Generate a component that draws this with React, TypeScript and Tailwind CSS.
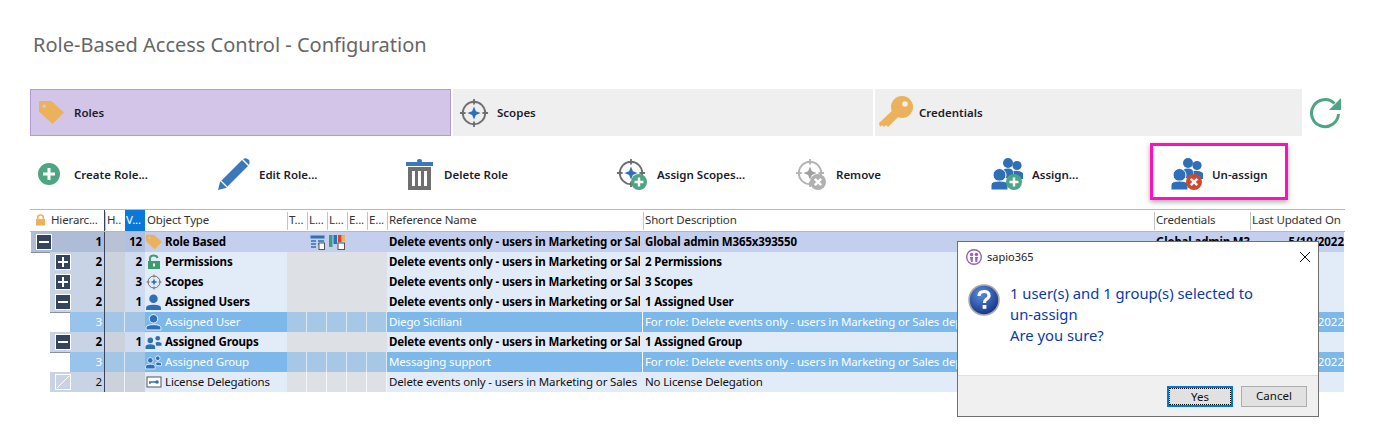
import type { ReactNode } from 'react'

const cols = 'grid grid-cols-[75px_20px_20px_142px_20px_20px_20px_20px_20px_256px_511px_96px_94px]'

function TagIcon({ size = 25, hole = '#d3c5e8' }: { size?: number; hole?: string }) {
  return (
    <svg width={size} height={size} viewBox="0 0 24 24">
      <path d="M0 1 H11 Q12 1 13 2 L24 12 L13 23 L0 11 Z" fill="#ebb25b" />
      <circle cx="5" cy="6" r="1.6" fill={hole} />
    </svg>
  )
}

function Crosshair({ size = 30, color = '#6f6f6f', star = '#2f6fb7' }: { size?: number; color?: string; star?: string }) {
  return (
    <svg width={size} height={size} viewBox="0 0 32 32">
      <circle cx="16" cy="16" r="12" fill="none" stroke={color} strokeWidth="2" />
      <path d="M16 1 V7 M16 25 V31 M1 16 H7 M25 16 H31" stroke={color} strokeWidth="2" />
      <path d="M16 9 L18 14 L23 16 L18 18 L16 23 L14 18 L9 16 L14 14 Z" fill={star} />
    </svg>
  )
}

function Badge({ color, plus }: { color: string; plus: boolean }) {
  return (
    <svg className="absolute right-[1px] bottom-0" width="16" height="16" viewBox="0 0 16 16">
      <circle cx="8" cy="8" r="8" fill={color} />
      {plus ? (
        <path d="M8 3.5 V12.5 M3.5 8 H12.5" stroke="#fff" strokeWidth="2.4" />
      ) : (
        <path d="M4.8 4.8 L11.2 11.2 M11.2 4.8 L4.8 11.2" stroke="#fff" strokeWidth="2.4" />
      )}
    </svg>
  )
}

function People({ badge }: { badge: ReactNode }) {
  return (
    <div className="relative w-[32px] h-[32px]">
      <svg width="32" height="32" viewBox="0 0 32 32" fill="#2f6fb7">
        <circle cx="17" cy="5" r="5" />
        <path d="M11 20 V15 Q11 10.5 17 10.5 Q22 10.5 22 14 V20 Z" />
        <circle cx="26" cy="7.5" r="4.6" />
        <path d="M22.5 21 V13 Q28 12 32 15 V21 Z" />
        <circle cx="8.5" cy="17" r="6.5" stroke="#fff" strokeWidth="1" />
        <path d="M0 32 V27 Q0 23 8.5 23 Q17 23 17 27 V32 Z" stroke="#fff" strokeWidth="1" />
      </svg>
      {badge}
    </div>
  )
}

function SmallPerson({ outline }: { outline?: boolean }) {
  return (
    <svg width="17" height="17" viewBox="0 0 16 16" fill="#2f6fb7" stroke={outline ? '#fff' : 'none'} strokeWidth="0.8">
      <circle cx="8" cy="4.5" r="4" />
      <path d="M1 15 V13 Q1 10 8 10 Q15 10 15 13 V15 Z" />
    </svg>
  )
}

function SmallGroup({ outline }: { outline?: boolean }) {
  return (
    <svg width="17" height="17" viewBox="0 0 16 16" fill="#2f6fb7" stroke={outline ? '#fff' : 'none'} strokeWidth="0.7">
      <circle cx="12" cy="4" r="2.2" />
      <path d="M10 8 Q12 7 15.5 8.4 V11 H10.5 Z" />
      <circle cx="5" cy="6" r="2.6" />
      <path d="M0.5 14 V12 Q0.5 9.6 5 9.6 Q9.5 9.6 9.5 12 V14 Z" />
    </svg>
  )
}

function SmallLock() {
  return (
    <svg width="16" height="16" viewBox="0 0 16 16">
      <path d="M4 7 V4.5 Q4 1.5 7.5 1.5 Q11 1.5 11.5 4" fill="none" stroke="#3d9b6e" strokeWidth="2" />
      <rect x="2" y="7" width="12" height="8" fill="#3d9b6e" />
      <rect x="7" y="9.5" width="2" height="3" fill="#fff" />
    </svg>
  )
}

function SmallLicense() {
  return (
    <svg width="16" height="16" viewBox="0 0 16 16">
      <rect x="1" y="3" width="14" height="10" fill="#fff" stroke="#555" />
      <circle cx="11" cy="8" r="1.8" fill="#2f6fb7" />
      <path d="M3 8 H10 M4 8 V10" stroke="#2f6fb7" strokeWidth="1.4" />
    </svg>
  )
}

function Expander({ kind }: { kind: 'plus' | 'minus' | 'none' }) {
  if (kind === 'none') {
    return (
      <svg width="16" height="16" viewBox="0 0 16 16">
        <rect x="0.5" y="0.5" width="15" height="15" fill="none" stroke="#fff" />
        <path d="M2 14 L14 2" stroke="#fff" />
      </svg>
    )
  }
  return (
    <svg width="16" height="16" viewBox="0 0 16 16">
      <rect x="0.5" y="0.5" width="15" height="15" fill="#33445c" stroke="#fff" />
      <path d={kind === 'plus' ? 'M3 8 H13 M8 3 V13' : 'M3 8 H13'} stroke="#fff" strokeWidth="2" />
    </svg>
  )
}

const rows = [
  { level: 1, exp: 'minus', count: '12', icon: <TagIcon size={16} hole="#c3cdec" />, type: 'Role Based', ref: 'Delete events only - users in Marketing or Sales', desc: 'Global admin M365x393550', cred: 'Global admin M365x393550', date: '5/10/2022', kind: 'root' },
  { level: 2, exp: 'plus', count: '2', icon: <SmallLock />, type: 'Permissions', ref: 'Delete events only - users in Marketing or Sales', desc: '2 Permissions', kind: 'group' },
  { level: 2, exp: 'plus', count: '3', icon: <Crosshair size={16} />, type: 'Scopes', ref: 'Delete events only - users in Marketing or Sales', desc: '3 Scopes', kind: 'group' },
  { level: 2, exp: 'minus', count: '1', icon: <SmallPerson />, type: 'Assigned Users', ref: 'Delete events only - users in Marketing or Sales', desc: '1 Assigned User', kind: 'group' },
  { level: 3, exp: '', count: '', icon: <SmallPerson outline />, type: 'Assigned User', ref: 'Diego Siciliani', desc: 'For role: Delete events only - users in Marketing or Sales department', date: '5/10/2022', kind: 'selected' },
  { level: 2, exp: 'minus', count: '1', icon: <SmallGroup />, type: 'Assigned Groups', ref: 'Delete events only - users in Marketing or Sales', desc: '1 Assigned Group', kind: 'group' },
  { level: 3, exp: '', count: '', icon: <SmallGroup outline />, type: 'Assigned Group', ref: 'Messaging support', desc: 'For role: Delete events only - users in Marketing or Sales department', date: '5/10/2022', kind: 'selected' },
  { level: 2, exp: 'none', count: '', icon: <SmallLicense />, type: 'License Delegations', ref: 'Delete events only - users in Marketing or Sales department', desc: 'No License Delegation', kind: 'plain' },
]

const palette: Record<string, { hier: string; num: string; count: string; main: string; mid: string; text: string; border: string; div: string }> = {
  root: { hier: 'bg-[#aebcd8]', num: 'bg-[#b9c2d4]', count: 'bg-[#b2c0df]', main: 'bg-[#c4ceed]', mid: 'bg-[#c4ceed]', text: 'font-bold text-black', border: 'border-b border-[#8a8f99]', div: '' },
  group: { hier: 'bg-[#c8d4e6]', num: 'bg-[#ccd2dc]', count: 'bg-[#cfdcf0]', main: 'bg-[#e2ebf8]', mid: 'bg-[#dde0e5]', text: 'font-bold text-black', border: 'border-b border-[#8a8f99]', div: '' },
  selected: { hier: 'bg-[#97c3ec]', num: 'bg-[#a3c6e6]', count: 'bg-[#a3c6e6]', main: 'bg-[#7db8ea]', mid: 'bg-[#a6c8e6]', text: 'text-white', border: '', div: 'border-r border-white/60' },
  plain: { hier: 'bg-[#c8d4e6]', num: 'bg-[#ccd2dc]', count: 'bg-[#ccd2dc]', main: 'bg-[#e2ebf8]', mid: 'bg-[#dde0e5]', text: 'text-[#111]', border: '', div: 'border-r border-white/70' },
}

function Tab({ label, icon, active, width, box }: { label: string; icon: ReactNode; active?: boolean; width: string; box: string }) {
  return (
    <div className={`${width} flex items-center h-full ${active ? 'bg-[#d3c5e8] border border-[#b19cd9]' : 'bg-[#efefef]'}`}>
      <div className={`${box} flex shrink-0`}>{icon}</div>
      <span className="text-[11.5px] font-semibold text-[#1c1c2c]">{label}</span>
    </div>
  )
}

function Tool({ label, icon, width, children }: { label: string; icon: ReactNode; width: string; children?: ReactNode }) {
  return (
    <div className={`${width} relative flex items-center h-[50px] shrink-0`}>
      <div className="w-[50px] flex justify-center shrink-0">{icon}</div>
      <span className="text-[11.5px] pt-[1px] font-semibold text-[#1c1c2c] whitespace-nowrap">{label}</span>
      {children}
    </div>
  )
}

function HeaderCell({ children, blue }: { children?: ReactNode; blue?: boolean }) {
  return (
    <div className={`flex items-center pl-[1px] pb-[1px] overflow-hidden whitespace-nowrap ${blue ? 'h-full bg-[#0a78d7] text-white' : 'border-l border-[#c4c4c4] h-[18px]'}`}>
      {children}
    </div>
  )
}

export default function App() {
  return (
    <div className="relative w-[1375px] h-[445px] overflow-hidden bg-white font-['Noto_Sans',sans-serif]">
      <div className="h-[89px] flex items-center pl-[33px] text-[20px] text-[#666]">
        Role-Based Access Control - Configuration
      </div>

      <div className="h-[47px] flex pl-[30px] gap-[2px]">
        <Tab active width="w-[421px]" box="w-[43px] pl-[8px]" label="Roles" icon={<TagIcon />} />
        <Tab width="w-[420px]" box="w-[44px] pl-[6px]" label="Scopes" icon={<Crosshair />} />
        <Tab
          width="w-[427px]"
          box="w-[44px] pl-[4px]"
          label="Credentials"
          icon={
            <svg width="34" height="34" viewBox="0 0 34 34">
              <circle cx="23" cy="11" r="11" fill="#ebb25b" />
              <circle cx="26" cy="8" r="2.8" fill="#efefef" />
              <path d="M16 12 L22 18 L9 31 L7 29 L5 31 L3 29 L1 31 L0 27 Z" fill="#ebb25b" />
            </svg>
          }
        />
        <div className="flex-1 flex pl-[6px] items-center">
          <svg width="32" height="32" viewBox="0 0 32 32">
            <path d="M24.5 6.5 A13.5 13.5 0 1 0 28.5 17" fill="none" stroke="#4ca583" strokeWidth="3" />
            <path d="M19 13 H31 V1 Z" fill="#4ca583" />
          </svg>
        </div>
      </div>

      <div className="h-[73px] flex items-center pl-[24px] pt-[3px]">
        <Tool
          width="w-[185px]"
          label="Create Role..."
          icon={
            <svg width="22" height="22" viewBox="0 0 22 22">
              <circle cx="11" cy="11" r="11" fill="#4ca583" />
              <path d="M11 5 V17 M5 11 H17" stroke="#fff" strokeWidth="3" />
            </svg>
          }
        />
        <Tool
          width="w-[185px]"
          label="Edit Role..."
          icon={
            <svg width="32" height="32" viewBox="0 0 32 32">
              <path d="M0 32 L2 24 L24 2 L30 8 L8 30 Z" fill="#3a78bb" />
              <path d="M25 1 Q28 -1 31 2 Q32 4 31 7 Z" fill="#3a78bb" />
              <path d="M3 23 L9 29" stroke="#fff" strokeWidth="1.2" />
            </svg>
          }
        />
        <Tool
          width="w-[213px]"
          label="Delete Role"
          icon={
            <svg className="ml-[2px]" width="28" height="32" viewBox="0 0 28 32">
              <rect x="0" y="4" width="27" height="4" fill="#3a78bb" />
              <rect x="11" y="1" width="5" height="4" rx="2" fill="#3a78bb" />
              <rect x="2" y="9" width="23" height="23" fill="#6f6f6f" />
              <path d="M7.5 13 V28 M13.5 13 V28 M19.5 13 V28" stroke="#fff" strokeWidth="3" />
            </svg>
          }
        />
        <Tool
          width="w-[179px]"
          label="Assign Scopes..."
          icon={
            <div className="relative w-[32px] h-[32px]">
              <Crosshair size={30} />
              <Badge color="#4ca583" plus />
            </div>
          }
        />
        <Tool
          width="w-[196px]"
          label="Remove"
          icon={
            <div className="relative w-[32px] h-[32px]">
              <Crosshair size={30} color="#b4b4b4" star="#a0a0a0" />
              <Badge color="#b0b0b0" plus={false} />
            </div>
          }
        />
        <Tool width="w-[180px]" label="Assign..." icon={<People badge={<Badge color="#4ca583" plus />} />} />
        <Tool width="w-[130px]" label="Un-assign" icon={<People badge={<Badge color="#d0492f" plus={false} />} />}>
          <div className="absolute left-[-12px] top-[-6px] w-[138px] h-[57px] border-[3px] border-[#ff0fbe] shadow-[0_2px_5px_rgba(0,0,0,0.35)]" />
        </Tool>
      </div>

      <div className="ml-[30px] w-[1315px] text-[11.5px] tracking-[-0.15px] overflow-hidden">
        <div className={`${cols} h-[23px] border-y border-[#b8b8b8] items-center text-[#333] bg-white`}>
          <div className="flex items-center h-full pl-[5px] pb-[1px] gap-[5px] border-r border-[#33445c]">
            <svg width="11" height="14" viewBox="0 0 12 14">
              <path d="M3 6 V4 Q3 1.5 6 1.5 Q9 1.5 9 4 V6" fill="none" stroke="#ebb25b" strokeWidth="1.8" />
              <rect x="1" y="6" width="10" height="7" fill="#ebb25b" />
            </svg>
            <span className="whitespace-nowrap">Hierarc...</span>
          </div>
          <HeaderCell>H..</HeaderCell>
          <HeaderCell blue>V...</HeaderCell>
          <div className="pl-[2px] pb-[1px] whitespace-nowrap">Object Type</div>
          <HeaderCell>T...</HeaderCell>
          <HeaderCell>L...</HeaderCell>
          <HeaderCell>L...</HeaderCell>
          <HeaderCell>E...</HeaderCell>
          <HeaderCell>E...</HeaderCell>
          <HeaderCell>Reference Name</HeaderCell>
          <HeaderCell>Short Description</HeaderCell>
          <HeaderCell>Credentials</HeaderCell>
          <HeaderCell>Last Updated On</HeaderCell>
        </div>

        {rows.map((row) => {
          const p = palette[row.kind]
          return (
            <div key={row.type} className={`${cols} h-[20px] ${p.text}`}>
              <div className={`flex h-full border-r border-[#33445c] ${row.level === 2 ? 'pl-[20px]' : row.level === 3 ? 'pl-[40px]' : 'pl-[1px]'}`}>
                <div className={`flex-1 flex items-center justify-between pr-[2px] pl-[5px] ${p.hier} ${p.border}`}>
                  {row.exp ? <Expander kind={row.exp as 'plus' | 'minus' | 'none'} /> : <span />}
                  <span>{row.level}</span>
                </div>
              </div>
              <div className={`h-full ${p.div} ${p.num} ${p.border}`} />
              <div className={`h-full text-right pr-[3px] leading-[20px] ${p.count} ${p.border}`}>{row.count}</div>
              <div className={`h-full flex items-center gap-[3px] overflow-hidden whitespace-nowrap ${row.kind === 'selected' || row.kind === 'root' ? p.main : 'bg-[#e2ebf8]'} ${p.border}`}>
                <span className="w-[17px] flex justify-center shrink-0">{row.icon}</span>
                {row.type}
              </div>
              {[0, 1, 2, 3, 4].map((i) => (
                <div key={i} className={`h-full flex items-center justify-center ${p.div} ${p.mid} ${p.border}`}>
                  {row.kind === 'root' && i === 1 && (
                    <svg width="15" height="15" viewBox="0 0 15 15">
                      <rect x="0.5" y="0.5" width="14" height="3" fill="#2f6fb7" />
                      <path d="M1 6 H6 M8 6 H14 M1 9 H6 M8 9 H14 M1 12 H6" stroke="#2f6fb7" strokeWidth="1.6" />
                      <rect x="9" y="8" width="5.5" height="6.5" fill="#fff" stroke="#555" />
                    </svg>
                  )}
                  {row.kind === 'root' && i === 2 && (
                    <svg width="16" height="15" viewBox="0 0 16 15">
                      <rect x="0" y="0" width="3.5" height="12" fill="#3a9b8a" />
                      <rect x="4.5" y="0" width="3.5" height="9" fill="#2f6fb7" />
                      <rect x="9" y="0" width="3.5" height="7" fill="#d0492f" />
                      <rect x="13" y="0" width="3" height="6" fill="#ebb25b" />
                      <rect x="9" y="8" width="6.5" height="6.5" fill="#fff" stroke="#555" />
                    </svg>
                  )}
                </div>
              ))}
              <div className={`h-full leading-[20px] pl-[2px] pr-[3px] ${row.kind === 'selected' ? 'border-r border-white' : ''} ${p.main} ${p.border}`}>
                <div className="overflow-hidden whitespace-nowrap">{row.ref}</div>
              </div>
              <div className={`h-full leading-[20px] pl-[2px] overflow-hidden whitespace-nowrap ${p.main} ${p.border}`}>{row.desc}</div>
              <div className={`h-full leading-[20px] pl-[2px] overflow-hidden whitespace-nowrap ${p.main} ${p.border}`}>{row.cred}</div>
              <div className={`h-full leading-[20px] text-right whitespace-nowrap tracking-normal ${p.main} ${p.border}`}>{row.date}</div>
            </div>
          )
        })}
      </div>

      <div className="absolute left-[957px] top-[241px] w-[362px] h-[176px] bg-white border border-[#707070] flex flex-col">
        <div className="h-[30px] flex items-center pl-[8px] pr-[7px] gap-[5px] text-[11px] text-[#222]">
          <svg width="16" height="16" viewBox="0 0 16 16">
            <circle cx="8" cy="8" r="7.3" fill="#fff" stroke="#9a5fb4" strokeWidth="1.4" />
            <circle cx="5.6" cy="5.5" r="1.7" fill="#9a5fb4" />
            <circle cx="10.4" cy="5.5" r="1.7" fill="#9a5fb4" />
            <path d="M4 8 H7 L6.6 13 H5 Z M9 8 H12 L11 13 H9.4 Z" fill="#9a5fb4" />
          </svg>
          <span className="flex-1">sapio365</span>
          <svg width="12" height="12" viewBox="0 0 12 12">
            <path d="M1 1 L11 11 M11 1 L1 11" stroke="#111" strokeWidth="1" />
          </svg>
        </div>
        <div className="flex-1 flex pl-[10px] pt-[12px] gap-[10px]">
          <svg className="shrink-0" width="32" height="32" viewBox="0 0 32 32">
            <defs>
              <radialGradient id="q" cx="40%" cy="30%" r="75%">
                <stop offset="0%" stopColor="#5b8be0" />
                <stop offset="100%" stopColor="#12307f" />
              </radialGradient>
            </defs>
            <circle cx="16" cy="16" r="15" fill="url(#q)" stroke="#a9a9a9" strokeWidth="1.6" />
            <path d="M11 12 Q11 7.5 16 7.5 Q21 7.5 21 11.5 Q21 14 18 15.5 Q16.5 16.5 16.5 19" fill="none" stroke="#fff" strokeWidth="3.2" />
            <rect x="14.6" y="21" width="3.8" height="3.8" fill="#fff" />
          </svg>
          <div className="text-[14.8px] leading-[21px] text-[#0a3aa8] w-[300px] mt-[-1px]">
            1 user(s) and 1 group(s) selected to
            <br />
            un-assign
            <br />
            Are you sure?
          </div>
        </div>
        <div className="h-[41px] bg-[#f0f0f0] border-t border-[#dfdfdf] flex items-center justify-end gap-[8px] pr-[11px] text-[11.5px] text-[#111]">
          <button className="w-[66px] h-[21px] bg-[#e1e1e1] border-2 border-[#0078d7] outline-1 outline-dotted outline-black -outline-offset-3">Yes</button>
          <button className="w-[66px] h-[21px] bg-[#e1e1e1] border border-[#adadad]">Cancel</button>
        </div>
      </div>
    </div>
  )
}
